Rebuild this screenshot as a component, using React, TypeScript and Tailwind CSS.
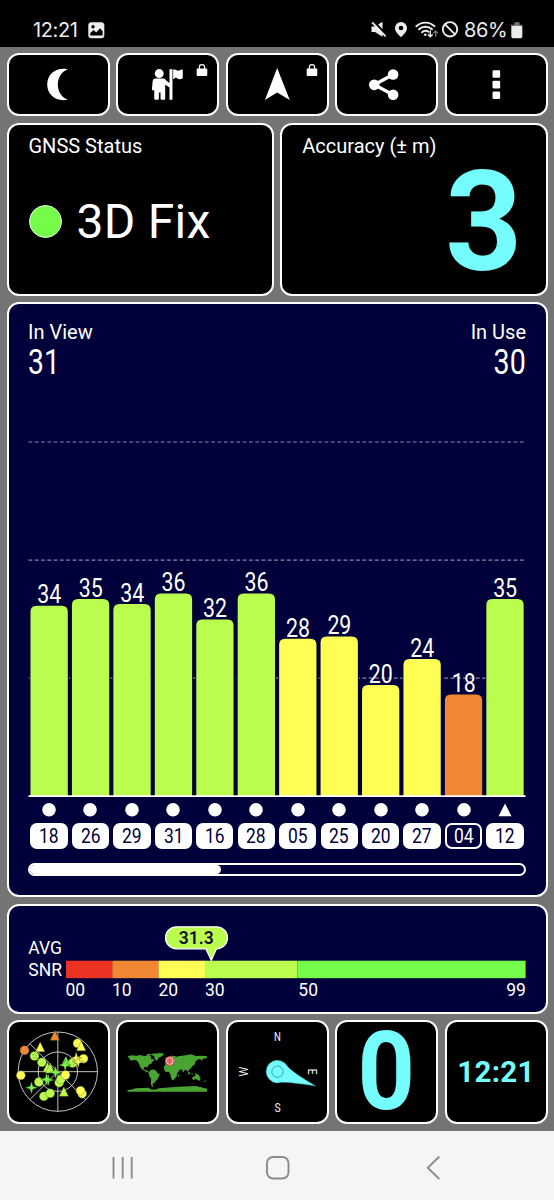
import type { ReactNode } from 'react'

const satellites = [
  { id: '18', snr: 34, top: 605.7, color: '#bbfd4f' },
  { id: '26', snr: 35, top: 599, color: '#bbfd4f' },
  { id: '29', snr: 34, top: 604, color: '#bbfd4f' },
  { id: '31', snr: 36, top: 593.4, color: '#bbfd4f' },
  { id: '16', snr: 32, top: 619.5, color: '#bbfd4f' },
  { id: '28', snr: 36, top: 593.4, color: '#bbfd4f' },
  { id: '05', snr: 28, top: 638.8, color: '#fffe54' },
  { id: '25', snr: 29, top: 636.4, color: '#fffe54' },
  { id: '20', snr: 20, top: 685, color: '#fffe54' },
  { id: '27', snr: 24, top: 659, color: '#fffe54' },
  { id: '04', snr: 18, top: 694.4, color: '#ef8733', unused: true },
  { id: '12', snr: 35, top: 599, color: '#bbfd4f', glonass: true },
]

const Panel = ({ className = '', children }: { className?: string; children: ReactNode }) => (
  <div className={`rounded-[12px] border-2 border-white ${className}`}>{children}</div>
)

const Lock = ({ x }: { x: number }) => (
  <g>
    <rect x={x} y="206" width="32" height="22" rx="3" fill="#fff" />
    <path d={`M${x + 8} 208v-6a8 8 0 0 1 16 0v6`} fill="none" stroke="#fff" strokeWidth="3.5" />
  </g>
)

const StatusBar = () => (
  <div className="h-[47px] bg-black text-[#ececec] flex items-center pt-[13px] pl-[33px] pr-[31px] font-['Inter',sans-serif]">
    <span className="text-[20px] leading-[24px] w-[46px] whitespace-nowrap tracking-[-0.4px]">12:21</span>
    <svg className="ml-[9px] w-[17px] h-[17px]" viewBox="0 0 17 17">
      <rect x="0.3" y="0.3" width="16" height="16" rx="3.2" fill="#ececec" />
      <circle cx="5" cy="4.8" r="1.7" fill="#000" />
      <path d="M2.2 13.6v-2.3L5.5 8l2.7 2.4L12 6.2l2.6 3v4.4z" fill="#000" />
    </svg>
    <svg className="ml-auto w-[91px] h-[20px]" viewBox="369 20 91 20">
      <path d="M371.500 26.600h3.500l7.500-4.800v14.900l-7.500-4.700h-3.500z" fill="#ececec" />
      <path d="M373.300 21l13.500 14.200" stroke="#000" strokeWidth="2.200" />
      <path d="M372.200 22.300l13.400 14" stroke="#ececec" strokeWidth="1.800" />
      <path d="M401 22a6 6 0 0 0-6 6c0 4 3.500 6.500 6 9.300 2.500-2.800 6-5.300 6-9.300a6 6 0 0 0-6-6z" fill="#ececec" />
      <circle cx="401" cy="28" r="2.300" fill="#000" />
      <g fill="none" stroke="#ececec" strokeWidth="1.900" strokeLinecap="round">
        <path d="M416.300 26.200c5.200-4.800 13-4.800 18.200 0M419 29.300c3.700-3.400 9.300-3.400 13 0M422 32.300c2-1.800 4.500-1.800 6.500-.5" />
        <path d="M430.300 31v5.500m-2-1.800l2 2 2-2" strokeWidth="1.400" />
        <path d="M435.700 36.200v-5m-1.800 1.600l1.800-1.800 1.800 1.800" stroke="#777" strokeWidth="1.300" />
        <circle cx="450" cy="29.300" r="7.200" />
        <path d="M445 24.300l10 10" />
      </g>
      <circle cx="425.300" cy="34.800" r="1.300" fill="#ececec" />
    </svg>
    <span className="ml-[4px] text-[20px] leading-[24px] w-[43px] whitespace-nowrap tracking-[-0.4px]">86%</span>
    <svg className="ml-[4px] w-[12px] h-[17px]" viewBox="0 0 12 17">
      <path d="M3.500 1.500h5M0 4h11.500" stroke="#777" strokeWidth="2.400" />
      <rect x="0.300" y="4" width="11" height="12.300" rx="1.700" fill="#ececec" />
    </svg>
  </div>
)

const Toolbar = () => (
  <div className="grid grid-cols-5 grid-rows-[63px] gap-[6.5px] h-[63px]">
    <Panel className="bg-black">
      <svg className="block w-full h-full" viewBox="27 165 296 178">
        <path d="M203 208C166 201 141 224 141 254s25 53 62 46c-20-8-30-26-30-46s10-38 30-46z" fill="#fff" />
      </svg>
    </Panel>
    <Panel className="bg-black">
      <svg className="block w-full h-full" viewBox="355 165 296 178">
        <circle cx="478" cy="221" r="13.500" fill="#fff" />
        <path d="M467 236h23c4 0 6 2 9 6l12 9v13l-15-9v43q0 2-3 2h-8q-3 0-3-3v-19h-5v19q0 3-3 3h-8q-3 0-3-3v-26h-5q-3 0-2-3l2-22q1-10 9-10z" fill="#fff" />
        <path d="M509 208h9v92h-9zM520 209c10-3 12 7 20 2l9-3v27c-9 5-13 3-17 0s-8 0-12 3z" fill="#fff" />
        <Lock x={591} />
      </svg>
    </Panel>
    <Panel className="bg-black">
      <svg className="block w-full h-full" viewBox="684 165 296 178">
        <path d="M831 204l38 97-38-23-37 23z" fill="#fff" />
        <Lock x={920} />
      </svg>
    </Panel>
    <Panel className="bg-black">
      <svg className="block w-full h-full" viewBox="181 165 296 178">
        <path d="M349 224l-57 31 57 30" fill="none" stroke="#fff" strokeWidth="10" />
        <circle cx="349" cy="224" r="16" fill="#fff" />
        <circle cx="292" cy="255" r="16" fill="#fff" />
        <circle cx="349" cy="285" r="16" fill="#fff" />
      </svg>
    </Panel>
    <Panel className="bg-black">
      <svg className="block w-full h-full" viewBox="510 165 296 178" fill="#fff">
        <rect x="646" y="211" width="23" height="23" rx="4" />
        <rect x="646" y="243" width="23" height="23" rx="4" />
        <rect x="646" y="275" width="23" height="23" rx="4" />
      </svg>
    </Panel>
  </div>
)

const SignalChart = () => (
  <Panel className="bg-[#00003b] mt-[6.5px] h-[594.5px] px-[19.5px] pt-[16px]">
    <div className="flex justify-between">
      <div>
        <div className="text-[20px] leading-[24px]">In View</div>
        <div className="text-[34.5px] leading-[36px]">
          <span className="inline-block origin-left scale-x-[0.82]">31</span>
        </div>
      </div>
      <div className="text-right">
        <div className="text-[20px] leading-[24px]">In Use</div>
        <div className="text-[34.5px] leading-[36px]">
          <span className="inline-block origin-right scale-x-[0.83]">30</span>
        </div>
      </div>
    </div>
    <svg className="block w-[498px] h-[418px]" viewBox="28 380 498 418">
      {[442, 560.2, 678.2].map((y) => (
        <path key={y} d={`M28.500 ${y}H525.500`} stroke="#8989a8" strokeWidth="1.200" strokeDasharray="3.800 2.500" />
      ))}
      {satellites.map((sat, i) => {
        const x = 30.5 + i * 41.44
        return (
          <g key={sat.id}>
            <path
              d={`M${x} 796V${sat.top + 6}q0-6 6-6h25.300q6 0 6 6V796z`}
              fill={sat.color}
              stroke="#00003b"
              strokeWidth="2"
              paintOrder="stroke"
            />
            <text
              x={x + 18.8}
              y={sat.top - 2.3}
              textAnchor="middle"
              fontSize="25"
              fill="#fff"
              textLength="24"
              lengthAdjust="spacingAndGlyphs"
            >
              {sat.snr}
            </text>
          </g>
        )
      })}
      <path d="M28.500 796.200H525.500" stroke="#fff" strokeWidth="1.800" />
    </svg>
    <div className="grid grid-cols-12 gap-x-[4.1px] pl-[2.2px] pr-[2.2px] mt-[4.5px]">
      {satellites.map((sat) => (
        <div key={sat.id} className="flex flex-col items-center">
          <svg className="w-[14px] h-[14px]" viewBox="0 0 14 14" fill="#fff">
            {sat.glonass ? <path d="M7 0.500L13.500 13.300H0.500z" /> : <circle cx="7" cy="6.800" r="6.800" />}
          </svg>
          <div
            className={`mt-[6px] w-full h-[26px] rounded-[7px] border-2 border-white flex items-center justify-center text-[21px] leading-[22px] pt-[1px] ${
              sat.unused ? 'text-white' : 'bg-white text-[#00003b]'
            }`}
          >
            <span className="inline-block scale-x-[0.83]">{sat.id}</span>
          </div>
        </div>
      ))}
    </div>
    <div className="mt-[14.5px] h-[12.5px] w-[498px] rounded-full border-2 border-white overflow-hidden">
      <div className="h-full w-[191px] bg-white rounded-r-full" />
    </div>
  </Panel>
)

const AverageSnr = () => (
  <Panel className="bg-[#00003b] mt-[7px] h-[110.5px]">
    <svg className="block w-full h-full" viewBox="9 906 537 106.500" fontSize="17.500" fill="#fff">
      <text x="28.300" y="954">AVG</text>
      <text x="28.300" y="976.300">SNR</text>
      <rect x="66" y="960.700" width="46.500" height="17.500" fill="#ea3323" />
      <rect x="112.300" y="960.700" width="46.500" height="17.500" fill="#ef8733" />
      <rect x="158.600" y="960.700" width="46.500" height="17.500" fill="#fffe54" />
      <rect x="204.800" y="960.700" width="92.500" height="17.500" fill="#bbfd4f" />
      <rect x="297.300" y="960.700" width="228.300" height="17.500" fill="#75fc4b" />
      <text x="65.500" y="995.700">00</text>
      <text x="112" y="995.700">10</text>
      <text x="158.500" y="995.700">20</text>
      <text x="205" y="995.700">30</text>
      <text x="298.300" y="995.700">50</text>
      <text x="525.800" y="995.700" textAnchor="end">99</text>
      <path
        d="M176.500 926.800h40a11 11 0 0 1 0 22l-5.200 11.400-5.500-11.400h-29.300a11 11 0 0 1 0-22z"
        fill="#bbfd4f"
        stroke="#fff"
        strokeWidth="1.300"
      />
      <text x="196.300" y="944" textAnchor="middle" fontWeight="600" fontSize="17.500" fill="#10102a">31.3</text>
    </svg>
  </Panel>
)

const skyDots: [number, number, string][] = [
  [74, 123, '#ef8733'], [63, 198, '#fffe54'], [233, 102, '#fffe54'], [251, 148, '#fffe54'],
  [104, 140, '#bbfd4f'], [126, 159, '#bbfd4f'], [117, 218, '#bbfd4f'], [132, 261, '#bbfd4f'],
  [151, 252, '#bbfd4f'], [218, 161, '#bbfd4f'], [178, 220, '#bbfd4f'], [183, 210, '#bbfd4f'],
  [197, 197, '#fffe54'], [247, 253, '#fffe54'], [242, 244, '#fffe54'],
]

const skyTriangles: [number, number, string][] = [
  [165, 79, '#ef8733'], [121, 113, '#fffe54'], [244, 110, '#fffe54'], [143, 174, '#bbfd4f'],
  [151, 177, '#bbfd4f'], [198, 156, '#75fc4b'], [192, 247, '#bbfd4f'],
]

const skyStars: [number, number, string][] = [
  [229, 146, '#fffe54'], [235, 157, '#fffe54'], [95, 235, '#75fc4b'], [145, 212, '#75fc4b'],
  [167, 189, '#75fc4b'], [196, 167, '#75fc4b'], [140, 210, '#75fc4b'],
]

const SkyView = () => (
  <svg className="block w-full h-full" viewBox="28 38 296 300">
    <g fill="none" stroke="#e8e8e8" strokeWidth="2.500">
      <circle cx="174" cy="187" r="119" />
      <circle cx="174" cy="187" r="59" />
      <path d="M55 187H293M174 68V306M90 103l168 168M90 271l84-84" />
    </g>
    <g stroke="#56642a" strokeWidth="1.200">
      {skyDots.map(([x, y, c]) => <circle key={`${x}-${y}`} cx={x} cy={y} r="13.500" fill={c} />)}
      {skyTriangles.map(([x, y, c]) => <path key={`${x}-${y}`} d={`M${x} ${y - 15}l14 29h-28z`} fill={c} />)}
      {skyStars.map(([x, y, c]) => (
        <path key={`${x}-${y}`} d={`M${x} ${y - 18}l4 14 14 4-14 4-4 14-4-14-14-4 14-4z`} fill={c} />
      ))}
    </g>
    <path d="M96 139q7-9 15 0M100 146h12M219 152q10 7 0 17" fill="none" stroke="#3f8f2c" strokeWidth="1.500" />
  </svg>
)

const WorldMap = () => (
  <svg className="block w-full h-full" viewBox="355 37 296 300">
    <g fill="#4aa431">
      <path d="M383 139l17-2 10 2 8-3 17 3 11-4 9 7-3 5 8 1 3 5-8 4 3 3-7 3-4 2-4 7v4l-3-5-7 2-2 5 4 4 5-3v5l6 1 5 6-9-3-8-5-8-4-5-8-4-10-5-7-7-4-12 3z" />
      <path d="M442 133l12-1-4 6-7-1zM456 132l18-1h18l-4 8-11 5-7 10-6-7-1-8-9-3zM494 145l8-1-2 3h-5z" />
      <path d="M452 181l9-2 9 6 2 5 8 4-4 8-2 6-5 4-5 7-4 2-2 7 4 5-6-2-3-9 1-15-6-8-1-9z" />
      <path d="M496 166l1-7 7-1-4-6 7-1 3-5-3-3 9-5 12 1-2 4 8-3 24-3 16-3 14 5 18-1 15 2v6l-11 1-4 6-5-5-10 3-5 7-2 7-6 4-6 8-5 3-2 8-5-7-5-1-4 9-3-7-7-3-5 6-7 2-6-9-5-4-6-1-3 2-7-5-5 4-7 2z" />
      <path d="M497 168l13-2 5 4 12 1 6 10 6 1-7 9-1 8-7 9-4 4-4-1-5-18-3-6-11-1-5-7zM535 195l4-3-2 8-4 2zM499 151l4-3v8l-5 1z" />
      <path d="M554 185l6 6M563 190l6-4 2 6-5 3zM574 190l5 1-1 4zM583 190l9 3 4 5-10-3zM578 203l7-4 4-4 5 2 2-3 5 10 1 6-4 4-5-4-6-2-7 3-3-4zM613 215l5-4 1 2-7 5z" />
      <path d="M383 242l16-3 8-3 40-2 6 5 12 1 12-4 20-2 40-3 50-2 14 3 21 5v9H383z" />
    </g>
    <circle cx="510" cy="154" r="14.500" fill="#d94a4a" />
    <circle cx="510" cy="154" r="10" fill="none" stroke="#ffd9d9" strokeWidth="3" />
    <circle cx="510" cy="154" r="4" fill="#d22c2c" stroke="#ffd9d9" strokeWidth="1.500" />
  </svg>
)

const Compass = () => (
  <svg className="block w-full h-full" viewBox="38 38 296 300">
    <g fill="#f4f4f4" fontSize="40" textAnchor="middle">
      <text transform="translate(186 96) scale(.72 1)">N</text>
      <text transform="translate(186 308) scale(.78 1)">S</text>
      <text transform="translate(96 187) rotate(-90) scale(.82 1)">W</text>
      <text transform="translate(277 187) rotate(90) scale(.78 1)">E</text>
    </g>
    <path
      d="M216 171Q226 186 300 230 222 218 197 219A34 34 0 1 1 216 171z"
      fill="#75fcfd"
      stroke="#3a9fa0"
      strokeWidth="1.500"
    />
    <circle cx="186" cy="187" r="17" fill="none" stroke="#298f98" strokeWidth="2.500" />
  </svg>
)

const BottomTiles = () => (
  <div className="grid grid-cols-5 grid-rows-[104px] gap-[6.5px] mt-[6px] h-[104px]">
    <Panel className="bg-black"><SkyView /></Panel>
    <Panel className="bg-black"><WorldMap /></Panel>
    <Panel className="bg-black"><Compass /></Panel>
    <Panel className="bg-black flex items-center justify-center">
      <span className="text-[109px] leading-[128px] -my-4 font-bold text-[#75fcfd] scale-x-[0.92]">0</span>
    </Panel>
    <Panel className="bg-black flex items-center justify-center">
      <span className="text-[29.5px] leading-[40px] font-bold tracking-[0.3px] text-[#75fcfd]">12:21</span>
    </Panel>
  </div>
)

const NavBar = () => (
  <div className="h-[69px] bg-[#f5f5f8]">
    <svg className="block w-[554px] h-[69px]" viewBox="0 1131 554 69" fill="none" stroke="#8a8b8d" strokeWidth="1.900">
      <path d="M113.500 1157v21.500M122.700 1157v21.500M131.700 1157v21.500" />
      <rect x="267" y="1157" width="21.500" height="21.500" rx="6" />
      <path d="M439.300 1156.500l-11.500 11.200 11.500 11.300" />
    </svg>
  </div>
)

export default function App() {
  return (
    <div className="w-[554px] h-[1200px] overflow-hidden flex flex-col font-['Roboto',sans-serif] text-white">
      <StatusBar />
      <main className="h-[1084px] bg-[#747474] px-[6.5px] pt-[6px]">
        <Toolbar />
        <div className="grid grid-cols-2 gap-[6.5px] mt-[6.5px] h-[173px]">
          <Panel className="bg-black pl-[20px] pt-[9.5px]">
            <div className="text-[20px] leading-[24px]">GNSS Status</div>
            <div className="flex items-center mt-[35px] h-[56px]">
              <div className="w-[33px] h-[33px] rounded-full bg-[#75fc4b] border border-[#e3ffdb]" />
              <div className="ml-[15px] text-[48px] leading-[58px] tracking-[0.3px] translate-y-[1px]">3D Fix</div>
            </div>
          </Panel>
          <Panel className="bg-black pl-[20px] pr-[23px] pt-[9.5px]">
            <div className="text-[20px] leading-[24px]">Accuracy (± m)</div>
            <div className="text-right text-[140px] leading-[164px] -mt-[18px] -mb-[20px] font-bold text-[#75fcfd]">
              <span className="inline-block origin-right scale-x-[0.96]">3</span>
            </div>
          </Panel>
        </div>
        <SignalChart />
        <AverageSnr />
        <BottomTiles />
      </main>
      <NavBar />
    </div>
  )
}
